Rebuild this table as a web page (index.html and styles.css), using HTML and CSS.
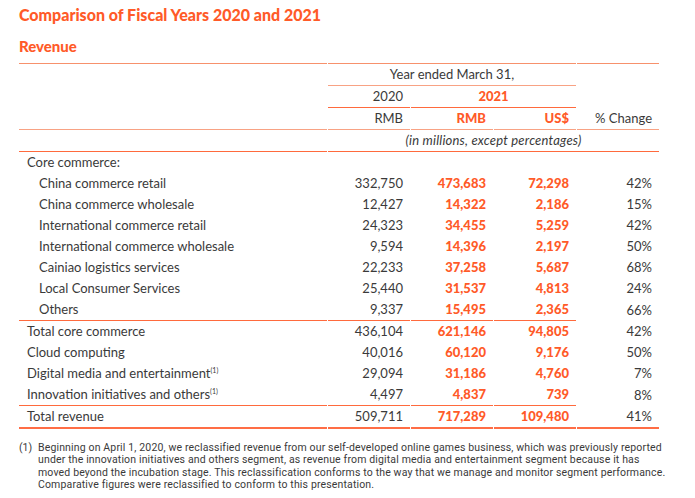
FILE: index.html
```html
<!DOCTYPE html>
<html lang="en">
<head>
<meta charset="utf-8">
<title>Comparison of Fiscal Years 2020 and 2021</title>
<link rel="stylesheet" href="styles.css">
</head>
<body>
<div class="page">
  <h1 class="title">Comparison of Fiscal Years 2020 and 2021</h1>
  <h2 class="subtitle">Revenue</h2>
  <table class="rev">
    <colgroup>
      <col class="c-label"><col class="c-num"><col class="c-num"><col class="c-num"><col class="c-num">
    </colgroup>
    <thead>
      <tr class="h1">
        <td class="top"></td>
        <td colspan="3" class="top center b-light">Year ended March 31,</td>
        <td class="top"></td>
      </tr>
      <tr class="h2">
        <td></td>
        <td class="num b-dark">2020</td>
        <td colspan="2" class="center hl b-dark">2021</td>
        <td></td>
      </tr>
      <tr class="h3">
        <td class="b-light"></td>
        <td class="num b-light">RMB</td>
        <td class="num hl b-light">RMB</td>
        <td class="num hl b-light">US$</td>
        <td class="num b-light">% Change</td>
      </tr>
      <tr class="h4">
        <td class="b-dark"></td>
        <td colspan="4" class="center it b-dark">(in millions, except percentages)</td>
      </tr>
    </thead>
    <tbody>
      <tr><td class="lbl">Core commerce:</td><td></td><td></td><td></td><td></td></tr>
      <tr><td class="lbl sub">China commerce retail</td><td class="num">332,750</td><td class="num hl">473,683</td><td class="num hl">72,298</td><td class="num">42%</td></tr>
      <tr><td class="lbl sub">China commerce wholesale</td><td class="num">12,427</td><td class="num hl">14,322</td><td class="num hl">2,186</td><td class="num">15%</td></tr>
      <tr><td class="lbl sub">International commerce retail</td><td class="num">24,323</td><td class="num hl">34,455</td><td class="num hl">5,259</td><td class="num">42%</td></tr>
      <tr><td class="lbl sub">International commerce wholesale</td><td class="num">9,594</td><td class="num hl">14,396</td><td class="num hl">2,197</td><td class="num">50%</td></tr>
      <tr><td class="lbl sub">Cainiao logistics services</td><td class="num">22,233</td><td class="num hl">37,258</td><td class="num hl">5,687</td><td class="num">68%</td></tr>
      <tr><td class="lbl sub">Local Consumer Services</td><td class="num">25,440</td><td class="num hl">31,537</td><td class="num hl">4,813</td><td class="num">24%</td></tr>
      <tr class="sep"><td class="lbl sub b-dark">Others</td><td class="num b-dark">9,337</td><td class="num hl b-dark">15,495</td><td class="num hl b-dark">2,365</td><td class="num">66%</td></tr>
      <tr><td class="lbl">Total core commerce</td><td class="num">436,104</td><td class="num hl">621,146</td><td class="num hl">94,805</td><td class="num">42%</td></tr>
      <tr><td class="lbl">Cloud computing</td><td class="num">40,016</td><td class="num hl">60,120</td><td class="num hl">9,176</td><td class="num">50%</td></tr>
      <tr><td class="lbl">Digital media and entertainment<sup>(1)</sup></td><td class="num">29,094</td><td class="num hl">31,186</td><td class="num hl">4,760</td><td class="num">7%</td></tr>
      <tr class="sep"><td class="lbl b-dark">Innovation initiatives and others<sup>(1)</sup></td><td class="num b-dark">4,497</td><td class="num hl b-dark">4,837</td><td class="num hl b-dark">739</td><td class="num">8%</td></tr>
      <tr class="total"><td class="lbl b-thick">Total revenue</td><td class="num b-thick">509,711</td><td class="num hl b-thick">717,289</td><td class="num hl b-thick">109,480</td><td class="num b-thick">41%</td></tr>
    </tbody>
  </table>
  <div class="note">
    <span class="note-num">(1)</span>
    <p class="note-text">Beginning on April 1, 2020, we reclassified revenue from our self-developed online games business, which was previously reported<br>under the innovation initiatives and others segment, as revenue from digital media and entertainment segment because it has<br>moved beyond the incubation stage. This reclassification conforms to the way that we manage and monitor segment performance.<br>Comparative figures were reclassified to conform to this presentation.</p>
  </div>
</div>
</body>
</html>
```

FILE: styles.css
```css
html, body {
  margin: 0;
  padding: 0;
  background: #ffffff;
}
.page {
  padding: 4px 20px 0 19px;
  font-family: "Lato", "Noto Sans", sans-serif;
  color: #3a3a3a;
}
.title {
  margin: 0;
  font-size: 16px;
  font-weight: 900;
  line-height: 22px;
  color: #ff5a28;
}
.subtitle {
  margin: 11px 0 0 0;
  font-size: 15px;
  font-weight: 900;
  line-height: 18px;
  color: #ff5a28;
}
.rev {
  margin-top: 8px;
  width: 642px;
  margin-left: -1px;
  border-collapse: separate;
  border-spacing: 1px 0;
  table-layout: fixed;
  font-size: 13px;
}
.c-label { width: 308px; }
.c-num { width: 82px; }
.rev td {
  padding: 0;
  height: 21px;
  line-height: 21px;
  white-space: nowrap;
}
.rev td.num {
  text-align: right;
  padding-right: 7px;
}
.rev td.center { text-align: center; }
.rev td.hl {
  color: #ff5a28;
  font-weight: 900;
}
.rev td.it {
  font-style: italic;
  letter-spacing: 0.2px;
}
.rev td.top { border-top: 1px solid #f7916c; }
.rev td.b-light { border-bottom: 1px solid #f8a284; }
.rev td.b-dark { border-bottom: 1px solid #ff6a3d; }
.rev td.b-thick { border-bottom: 2px solid #ff6d45; }
.rev td.lbl { padding-left: 8px; }
.rev td.sub { padding-left: 20px; }
.rev sup {
  font-size: 7px;
  line-height: 0;
  vertical-align: 5px;
}
.note {
  display: flex;
  margin-top: 13px;
  font-family: "Roboto", "Liberation Sans", sans-serif;
  font-size: 10.5px;
  line-height: 12.4px;
  color: #3a3a3a;
}
.note-num {
  flex: 0 0 19px;
}
.note-text {
  margin: 0;
  white-space: nowrap;
  letter-spacing: 0.15px;
}
```
